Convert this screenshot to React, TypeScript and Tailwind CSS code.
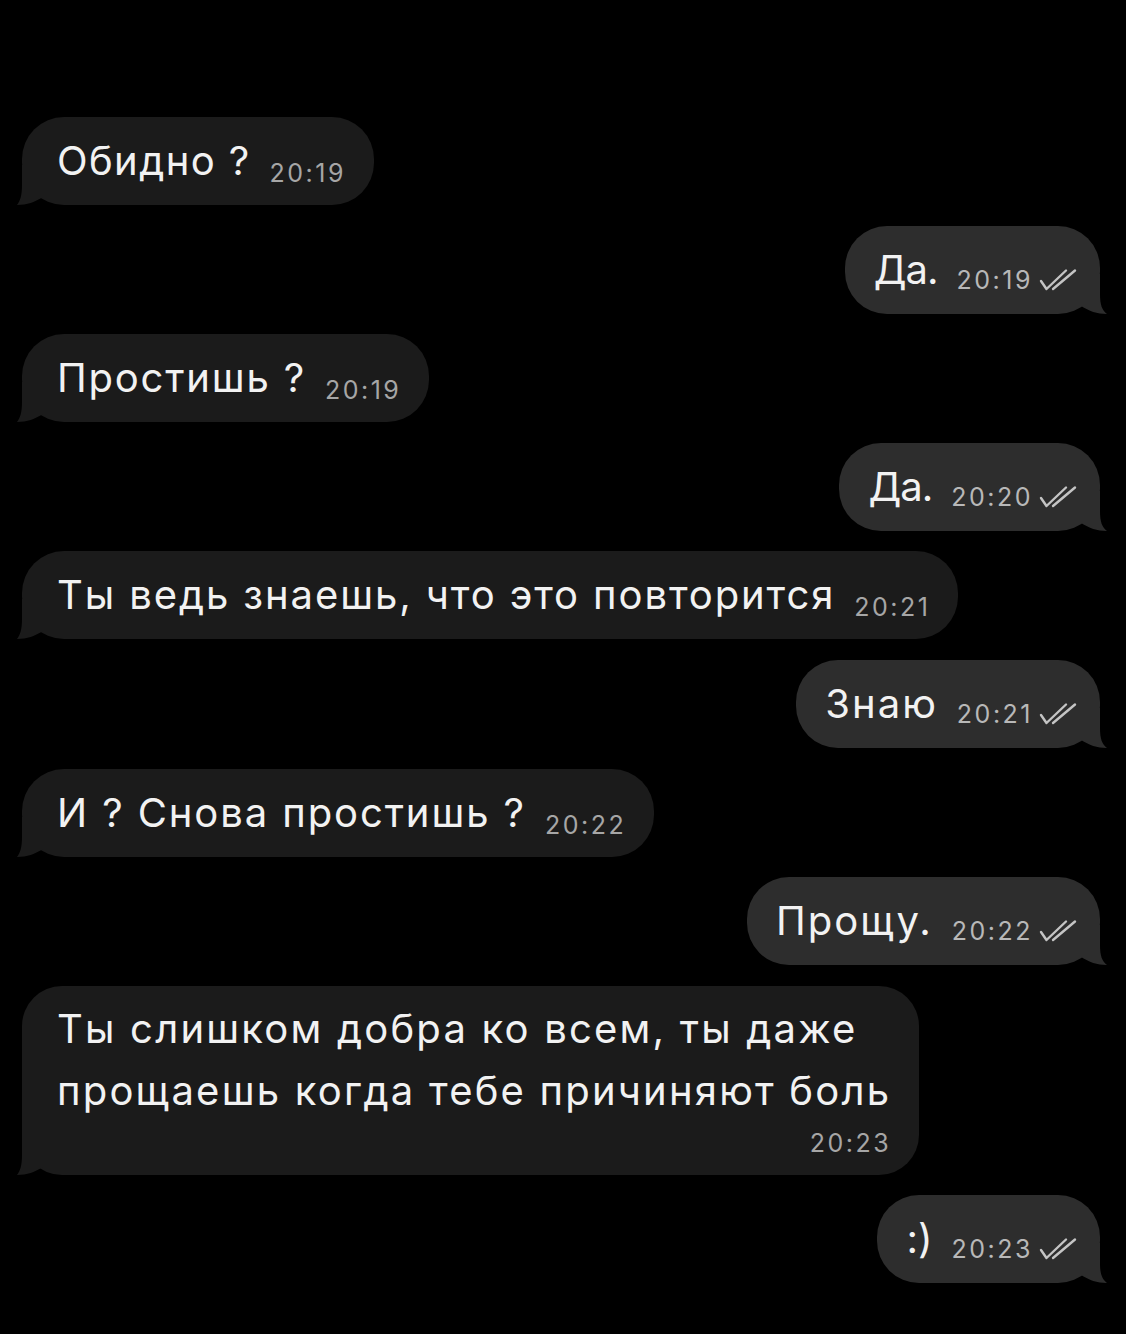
import React from "react";

type Msg = { out?: boolean; text: string; time: string; multi?: boolean; track: string };

const messages: Msg[] = [
  { text: "Обидно ?", time: "20:19", track: "tracking-[1.4px]" },
  { out: true, text: "Да.", time: "20:19", track: "tracking-[-1px]" },
  { text: "Простишь ?", time: "20:19", track: "tracking-[1.8px]" },
  { out: true, text: "Да.", time: "20:20", track: "tracking-[-1px]" },
  { text: "Ты ведь знаешь, что это повторится", time: "20:21", track: "tracking-[1.9px]" },
  { out: true, text: "Знаю", time: "20:21", track: "tracking-[2px]" },
  { text: "И ? Снова простишь ?", time: "20:22", track: "tracking-[1.9px]" },
  { out: true, text: "Прощу.", time: "20:22", track: "tracking-[2px]" },
  {
    text: "Ты слишком добра ко всем, ты даже\nпрощаешь когда тебе причиняют боль",
    time: "20:23",
    multi: true,
    track: "tracking-[2.2px]",
  },
  { out: true, text: ":)", time: "20:23", track: "tracking-[0px]" },
];

const Checks = () => (
  <svg width="38" height="23" viewBox="0 0 38 23" className="ml-[6px] shrink-0">
    <g stroke="#c4c4c4" strokeWidth="2.4" fill="none" strokeLinecap="round" strokeLinejoin="round">
      <path d="M2 13 L7.5 21 L27 2.5" />
      <path d="M14 21 L36 2.5" />
    </g>
  </svg>
);

const TailIn = ({ color }: { color: string }) => (
  <svg width="40" height="40" viewBox="0 0 40 40" className="absolute left-[-6px] bottom-0">
    <path d="M6 0 L6 20 C6 31 4 36 1 40 C11 40 19 37 27 32 L36 32 L36 0 Z" fill={color} />
  </svg>
);

const TailOut = ({ color }: { color: string }) => (
  <svg width="40" height="40" viewBox="0 0 40 40" className="absolute right-[-8px] bottom-0">
    <path d="M32 0 L32 20 C32 31 34 36 39 40 C29 40 21 37 13 32 L4 32 L4 0 Z" fill={color} />
  </svg>
);

const Bubble = ({ m }: { m: Msg }) => {
  if (m.multi) {
    return (
      <div className="relative self-start bg-[#1b1b1b] rounded-[40px] pl-[35px] pr-[28px] pt-[12px] pb-[17px]">
        <TailIn color="#1b1b1b" />
        <div className={"relative whitespace-pre-line text-[40px] leading-[62px] text-[#f2f2f2] " + m.track}>
          {m.text}
        </div>
        <div className="relative text-right text-[25px] leading-[30px] text-[#a6a6a6] tracking-[2.5px] mt-[6px]">
          {m.time}
        </div>
      </div>
    );
  }
  const color = m.out ? "#2d2d2d" : "#1b1b1b";
  return (
    <div
      className={
        m.out
          ? "relative self-end h-[88px] bg-[#2d2d2d] rounded-[42px] pl-[29px] pr-[23px] flex items-center"
          : "relative self-start h-[88px] bg-[#1b1b1b] rounded-[42px] pl-[35px] pr-[28px] flex items-center"
      }
    >
      {m.out ? <TailOut color={color} /> : <TailIn color={color} />}
      <div className="relative flex items-baseline">
        <span className={"text-[40px] leading-[48px] text-[#f2f2f2] " + m.track}>{m.text}</span>
        <span
          className={
            m.out
              ? "ml-[19px] text-[25px] leading-[30px] tracking-[2.5px] text-[#b8b8b8] translate-y-[5px]"
              : "ml-[19px] text-[25px] leading-[30px] tracking-[2.5px] text-[#a6a6a6] translate-y-[7px]"
          }
        >
          {m.time}
        </span>
        {m.out && (
          <span className="translate-y-[5px] self-end mb-[8px]">
            <Checks />
          </span>
        )}
      </div>
    </div>
  );
};

export default function App() {
  return (
    <div
      className="w-[1126px] h-[1334px] bg-black overflow-hidden pt-[117px] pl-[22px] pr-[26px] flex flex-col gap-[20.6px]"
      style={{ fontFamily: "Inter, Roboto, 'Noto Sans', sans-serif" }}
    >
      {messages.map((m, i) => (
        <Bubble key={i} m={m} />
      ))}
    </div>
  );
}
